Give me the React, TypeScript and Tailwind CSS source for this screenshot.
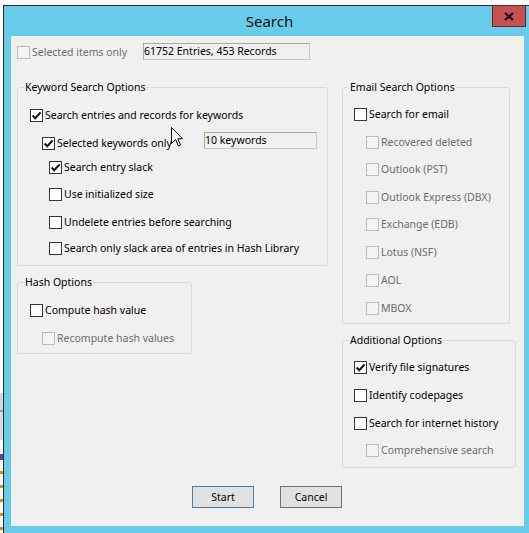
import React from "react";

type CheckProps = {
    label: string;
    checked?: boolean;
    disabled?: boolean;
    className?: string;
};

// Classic win32 checkbox: 13px box, bold tick, label right next to it
const Check = ({ label, checked, disabled, className }: CheckProps) => (
    <div className={`flex items-center h-[13px] ${className ?? ""}`}>
        <span
            className={`w-[13px] h-[13px] shrink-0 border flex items-center justify-center ${disabled ? "border-[#bcbcbc] bg-[#f4f4f4]" : "border-[#333333] bg-white"
                }`}
        >
            {checked && (
                <svg width="11" height="11" viewBox="0 0 11 11">
                    <path d="M1.6 5.6 L4.2 8.2 L9.6 2.4" fill="none" stroke="#111" strokeWidth="2.1" />
                </svg>
            )}
        </span>
        <span className={`ml-[2px] whitespace-nowrap leading-none ${disabled ? "text-[#6d6d6d]" : "text-black"}`}>
            {label}
        </span>
    </div>
);

// Group box with its caption sitting on the top border
const Group = ({ title, className, children }: { title: string; className: string; children: React.ReactNode }) => (
    <div className={`relative border border-[#d5dbe0] rounded-[3px] ${className}`}>
        <span className="absolute left-[6px] -top-[8px] px-[1px] bg-[#f0f0f0] leading-[15px] text-black whitespace-nowrap">
            {title}
        </span>
        {children}
    </div>
);

const ReadOnlyBox = ({ text, className }: { text: string; className: string }) => (
    <div className={`h-[17px] border border-[#c9c9c9] border-t-[#a8a8a8] border-l-[#a8a8a8] bg-[#f0f0f0] leading-[15px] text-black whitespace-nowrap ${className}`}>
        {text}
    </div>
);

const App = () => {
    return (
        <div className="w-[529px] h-[533px] bg-white flex overflow-hidden font-['Noto_Sans',sans-serif] text-[10.5px]">
            {/* desktop peeking out on the left */}
            <div className="w-[3px] shrink-0 flex flex-col">
                <div className="h-[393px] bg-white" />
                <div className="h-[17px] bg-[#d6d6d6]" />
                <div className="h-[2px] bg-[#8fa3b6]" />
                <div className="h-[28px] bg-[#dadada]" />
                <div className="h-[14px] bg-white" />
                <div className="h-[6px] bg-[#6b3fa0]" />
                <div className="h-[11px] bg-white" />
                <div className="h-[3px] bg-[#e08a1e]" />
                <div className="h-[11px] bg-white" />
                <div className="h-[3px] bg-[#e08a1e]" />
                <div className="h-[11px] bg-white" />
                <div className="h-[3px] bg-[#e08a1e]" />
                <div className="h-[11px] bg-white" />
                <div className="h-[3px] bg-[#e08a1e]" />
                <div className="h-[11px] bg-white" />
                <div className="h-[3px] bg-[#e08a1e]" />
            </div>

            {/* window */}
            <div className="relative mt-[5px] w-[530px] h-[528px] shrink-0 border-l border-t border-[#2d2d2d] bg-[#69cbea]">
                <div className="h-[30px] flex items-center justify-center pl-[2px] text-[15px] text-[#111]">Search</div>
                <div className="absolute left-[488px] -top-[1px] w-[34px] h-[22px] bg-[#c75050] border border-[#5e2a2a] flex items-center justify-center">
                    <svg width="10" height="9" viewBox="0 0 10 9">
                        <path d="M1 1 L9 8 M9 1 L1 8" stroke="#111" strokeWidth="2.2" />
                    </svg>
                </div>

                {/* client area */}
                <div className="ml-[7px] w-[513px] h-[490px] bg-[#f0f0f0] flex flex-col">
                    {/* top row */}
                    <div className="flex items-start h-[24px]">
                        <Check label="Selected items only" disabled className="ml-[6px] mt-[10px] w-[126px]" />
                        <ReadOnlyBox text="61752 Entries, 453 Records" className="mt-[7px] w-[167px]" />
                    </div>

                    <div className="flex mt-[27px] ml-[6px]">
                        {/* left column */}
                        <div className="flex flex-col w-[311px]">
                            <Group title="Keyword Search Options" className="w-[311px] h-[179px]">
                                <Check label="Search entries and records for keywords" checked className="ml-[12px] mt-[21px]" />
                                <div className="flex items-start h-[13px] mt-[15px]">
                                    <Check label="Selected keywords only" checked className="ml-[24px]" />
                                    <ReadOnlyBox text="10 keywords" className="ml-auto mr-[10px] -mt-[5px] w-[113px]" />
                                </div>
                                <Check label="Search entry slack" checked className="ml-[31px] mt-[11px]" />
                                <Check label="Use initialized size" className="ml-[31px] mt-[14px]" />
                                <Check label="Undelete entries before searching" className="ml-[31px] mt-[15px]" />
                                <Check label="Search only slack area of entries in Hash Library" className="ml-[31px] mt-[13px]" />
                            </Group>

                            <Group title="Hash Options" className="w-[175px] h-[72px] mt-[16px]">
                                <Check label="Compute hash value" className="ml-[12px] mt-[21px]" />
                                <Check label="Recompute hash values" disabled className="ml-[24px] mt-[15px]" />
                            </Group>
                        </div>

                        {/* right column */}
                        <div className="flex flex-col ml-[14px]">
                            <Group title="Email Search Options" className="w-[168px] h-[237px]">
                                <Check label="Search for email" className="ml-[11px] mt-[20px]" />
                                <Check label="Recovered deleted" disabled className="ml-[23px] mt-[15px]" />
                                <Check label="Outlook (PST)" disabled className="ml-[23px] mt-[14px]" />
                                <Check label="Outlook Express (DBX)" disabled className="ml-[23px] mt-[15px]" />
                                <Check label="Exchange (EDB)" disabled className="ml-[23px] mt-[14px]" />
                                <Check label="Lotus (NSF)" disabled className="ml-[23px] mt-[15px]" />
                                <Check label="AOL" disabled className="ml-[23px] mt-[15px]" />
                                <Check label="MBOX" disabled className="ml-[23px] mt-[15px]" />
                            </Group>

                            <Group title="Additional Options" className="w-[174px] h-[128px] mt-[16px]">
                                <Check label="Verify file signatures" checked className="ml-[11px] mt-[20px]" />
                                <Check label="Identify codepages" className="ml-[11px] mt-[15px]" />
                                <Check label="Search for internet history" className="ml-[11px] mt-[15px]" />
                                <Check label="Comprehensive search" disabled className="ml-[23px] mt-[14px]" />
                            </Group>
                        </div>
                    </div>

                    {/* buttons */}
                    <div className="flex ml-[181px] mt-[18px] gap-[26px]">
                        <button className="w-[62px] h-[22px] bg-[#e1e1e1] border border-[#3c7fb1] text-black leading-none">Start</button>
                        <button className="w-[62px] h-[22px] bg-[#e1e1e1] border border-[#707070] text-black leading-none">Cancel</button>
                    </div>
                </div>

                {/* mouse pointer */}
                <svg className="absolute left-[167px] top-[121px]" width="13" height="20" viewBox="0 0 13 20">
                    <path d="M0.5 0.5 L0.5 16.5 L4.5 12.5 L7.5 19 L9.5 18 L6.8 11.8 L11.5 11.8 Z" fill="#fff" stroke="#000" strokeWidth="1" />
                </svg>
            </div>
        </div>
    );
};

export default App;
